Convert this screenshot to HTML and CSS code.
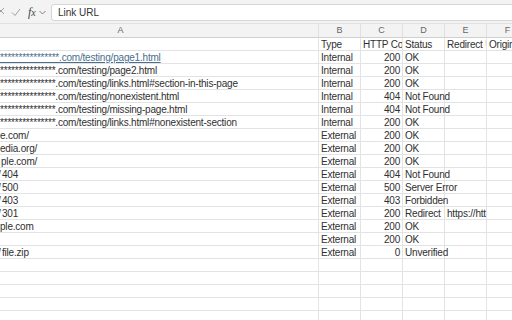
FILE: index.html
```html
<!DOCTYPE html>
<html>
<head>
<meta charset="utf-8">
<link rel="stylesheet" href="styles.css">
</head>
<body>
<div class="fbar">
  <div class="tools">
    <svg class="ico x" width="8" height="10" viewBox="0 0 8 10"><path d="M-2 1 L4 7 M4 1 L-2 7" stroke="#a0a0a0" stroke-width="1" fill="none"/></svg>
    <svg class="ico" width="10" height="10" viewBox="0 0 10 10"><path d="M1 5.5 L4 8.5 L9 2" stroke="#a0a0a0" stroke-width="1" fill="none"/></svg>
    <span class="fx">f<span class="sub">x</span></span>
    <svg class="ico chev" width="7" height="5" viewBox="0 0 7 5"><path d="M0.5 1 L3.5 4 L6.5 1" stroke="#777" stroke-width="0.9" fill="none"/></svg>
  </div>
  <div class="input">Link URL</div>
</div>
<div class="sheet">
  <div class="row hdr"><div class="c">A</div><div class="c">B</div><div class="c">C</div><div class="c">D</div><div class="c">E</div><div class="c">F</div></div>
  <div class="row"><div class="c a"></div><div class="c">Type</div><div class="c">HTTP Code</div><div class="c">Status</div><div class="c">Redirect URL</div><div class="c">Original URL</div></div>
  <div class="row"><div class="c a"><span class="link">****************.com/testing/page1.html</span></div><div class="c">Internal</div><div class="c n">200</div><div class="c">OK</div><div class="c"></div><div class="c"></div></div>
  <div class="row"><div class="c a">***************.com/testing/page2.html</div><div class="c">Internal</div><div class="c n">200</div><div class="c">OK</div><div class="c"></div><div class="c"></div></div>
  <div class="row"><div class="c a">***************.com/testing/links.html#section-in-this-page</div><div class="c">Internal</div><div class="c n">200</div><div class="c">OK</div><div class="c"></div><div class="c"></div></div>
  <div class="row"><div class="c a">***************.com/testing/nonexistent.html</div><div class="c">Internal</div><div class="c n">404</div><div class="c ov">Not Found</div><div class="c"></div><div class="c"></div></div>
  <div class="row"><div class="c a">***************.com/testing/missing-page.html</div><div class="c">Internal</div><div class="c n">404</div><div class="c ov">Not Found</div><div class="c"></div><div class="c"></div></div>
  <div class="row"><div class="c a">***************.com/testing/links.html#nonexistent-section</div><div class="c">Internal</div><div class="c n">200</div><div class="c">OK</div><div class="c"></div><div class="c"></div></div>
  <div class="row"><div class="c a">e.com/</div><div class="c">External</div><div class="c n">200</div><div class="c">OK</div><div class="c"></div><div class="c"></div></div>
  <div class="row"><div class="c a">edia.org/</div><div class="c">External</div><div class="c n">200</div><div class="c">OK</div><div class="c"></div><div class="c"></div></div>
  <div class="row"><div class="c a"><span class="pad1">ple.com/</span></div><div class="c">External</div><div class="c n">200</div><div class="c">OK</div><div class="c"></div><div class="c"></div></div>
  <div class="row"><div class="c a"><span class="cut">/</span>404</div><div class="c">External</div><div class="c n">404</div><div class="c ov">Not Found</div><div class="c"></div><div class="c"></div></div>
  <div class="row"><div class="c a"><span class="cut">/</span>500</div><div class="c">External</div><div class="c n">500</div><div class="c ov">Server Error</div><div class="c"></div><div class="c"></div></div>
  <div class="row"><div class="c a"><span class="cut">/</span>403</div><div class="c">External</div><div class="c n">403</div><div class="c ov">Forbidden</div><div class="c"></div><div class="c"></div></div>
  <div class="row"><div class="c a"><span class="cut">/</span>301</div><div class="c">External</div><div class="c n">200</div><div class="c">Redirect</div><div class="c">https://httpbin.org/get</div><div class="c"></div></div>
  <div class="row"><div class="c a">ple.com</div><div class="c">External</div><div class="c n">200</div><div class="c">OK</div><div class="c"></div><div class="c"></div></div>
  <div class="row"><div class="c a"></div><div class="c">External</div><div class="c n">200</div><div class="c">OK</div><div class="c"></div><div class="c"></div></div>
  <div class="row"><div class="c a"><span class="cut">/</span>file.zip</div><div class="c">External</div><div class="c n">0</div><div class="c ov">Unverified</div><div class="c"></div><div class="c"></div></div>
  <div class="row"><div class="c a"></div><div class="c"></div><div class="c"></div><div class="c"></div><div class="c"></div><div class="c"></div></div>
  <div class="row"><div class="c a"></div><div class="c"></div><div class="c"></div><div class="c"></div><div class="c"></div><div class="c"></div></div>
  <div class="row"><div class="c a"></div><div class="c"></div><div class="c"></div><div class="c"></div><div class="c"></div><div class="c"></div></div>
  <div class="row"><div class="c a"></div><div class="c"></div><div class="c"></div><div class="c"></div><div class="c"></div><div class="c"></div></div>
  <div class="row"><div class="c a"></div><div class="c"></div><div class="c"></div><div class="c"></div><div class="c"></div><div class="c"></div></div>
</div>
</body>
</html>
```
FILE: styles.css
```css
* { box-sizing: border-box; }
html, body {
  margin: 0;
  padding: 0;
  width: 512px;
  height: 320px;
  overflow: hidden;
  background: #ffffff;
  font-family: "Liberation Sans", Arial, sans-serif;
  color: #2f2f2f;
}
.fbar {
  height: 24px;
  background: #f3f3f3;
  border-bottom: 1px solid #e0e0e0;
  display: flex;
  align-items: center;
  padding-top: 1px;
}
.tools {
  width: 51px;
  display: flex;
  align-items: center;
  height: 16px;
}
.ico { display: block; flex: none; }
.ico.x { margin-right: 3px; }
.fx {
  font-family: "Liberation Serif", "Times New Roman", serif;
  font-style: italic;
  font-size: 12px;
  color: #444;
  margin-left: 7px;
  margin-right: 3px;
  line-height: 12px;
}
.fx .sub { font-size: 10px; }
.chev { margin-top: 1px; }
.input {
  flex: 1;
  height: 17px;
  margin-right: -6px;
  background: #ffffff;
  border: 1px solid #d6d6d6;
  border-radius: 3px;
  font-size: 10px;
  line-height: 15px;
  padding-left: 6px;
  color: #333;
}
.sheet {
  margin-left: -77px;
}
.row {
  display: grid;
  grid-template-columns: 396px 42px 42px 42px 42px 42px;
  height: 13px;
}
.c {
  height: 13px;
  border-right: 1px solid #e3e3e3;
  border-bottom: 1px solid #e3e3e3;
  font-size: 10px;
  letter-spacing: -0.2px;
  line-height: 14px;
  padding: 0 2px;
  white-space: nowrap;
  overflow: hidden;
}
.c.ov { overflow: visible; }
.c.a { padding-left: 77px; }
.c.n { text-align: right; }
.row.hdr { height: 14px; }
.row.hdr .c {
  height: 14px;
  background: #f3f3f3;
  border-bottom: 1px solid #cfcfcf;
  border-right: 1px solid #e0e0e0;
  text-align: center;
  color: #666;
  font-size: 9px;
  letter-spacing: 0;
  line-height: 13px;
}
.link {
  color: #4a6f8e;
  text-decoration: underline;
}
.pad1 { padding-left: 1px; }
.cut { display: inline-block; vertical-align: top; margin-left: -2px; width: 4px; overflow: hidden; }
```
